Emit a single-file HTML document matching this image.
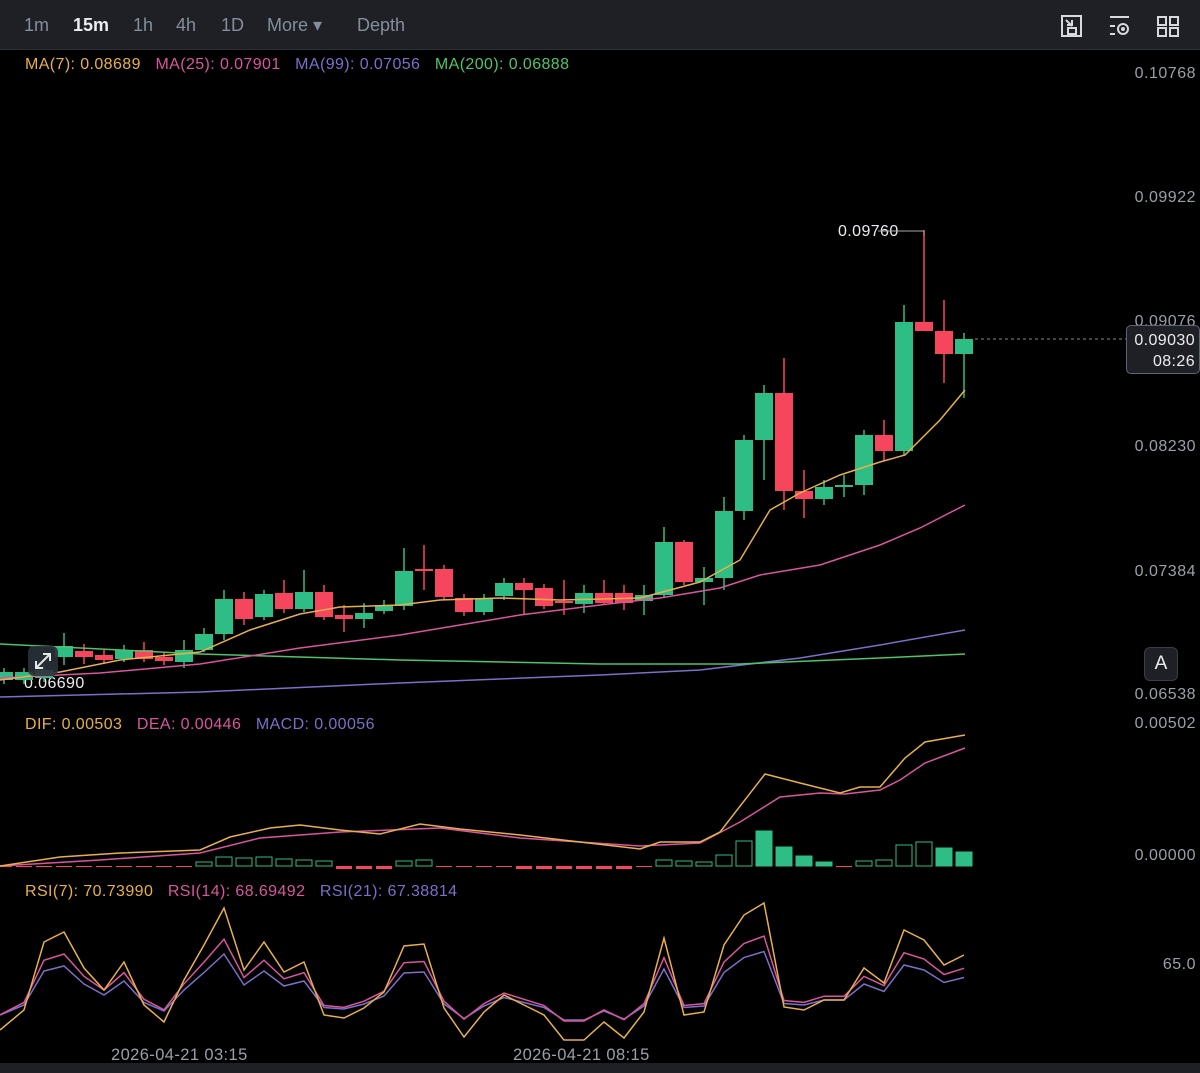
<!DOCTYPE html>
<html><head><meta charset="utf-8"><style>
body{margin:0;width:1200px;height:1073px;background:#000;overflow:hidden;font-family:"Liberation Sans",sans-serif;}
.top{position:absolute;left:0;top:0;width:1200px;height:49px;background:#1e2026;border-bottom:1px solid #2b2f36;}
.top span{position:absolute;top:15px;font-size:18px;color:#848e9c;}
.t{position:absolute;font-size:16px;letter-spacing:0.4px;white-space:nowrap}
.p{position:absolute;right:4px;font-size:16px;letter-spacing:0.5px;color:#9aa0a8}
</style></head><body>
<div class="top">
<span style="left:24px">1m</span><span style="left:73px;color:#eaecef;font-weight:bold">15m</span><span style="left:133px">1h</span><span style="left:176px">4h</span><span style="left:221px">1D</span><span style="left:267px">More ▾</span><span style="left:357px">Depth</span>
<svg style="position:absolute;left:1060px;top:14px" width="130" height="24" fill="none" stroke="#d6d9dd" stroke-width="2">
<rect x="2" y="2" width="19" height="20"/><path d="M6 6l6 6M7 11h5V6" /><rect x="8" y="14" width="8" height="6"/>
<path d="M50 3h19M50 12h5M50 20h5"/><circle cx="63" cy="15" r="5"/><circle cx="63" cy="15" r="1" fill="#d6d9dd"/>
<rect x="98" y="3" width="8" height="8"/><rect x="110" y="3" width="8" height="8"/><rect x="98" y="14" width="8" height="8"/><rect x="110" y="14" width="8" height="8"/>
</svg>
</div>
<div class="t" style="left:25px;top:56px"><span style="color:#e8b04a">MA(7): 0.08689</span>&nbsp;&nbsp;&nbsp;<span style="color:#d9569e">MA(25): 0.07901</span>&nbsp;&nbsp;&nbsp;<span style="color:#7b6fc9">MA(99): 0.07056</span>&nbsp;&nbsp;&nbsp;<span style="color:#4fc36a">MA(200): 0.06888</span></div>
<div class="t" style="left:25px;top:716px"><span style="color:#e8b04a">DIF: 0.00503</span>&nbsp;&nbsp;&nbsp;<span style="color:#d9569e">DEA: 0.00446</span>&nbsp;&nbsp;&nbsp;<span style="color:#7b6fc9">MACD: 0.00056</span></div>
<div class="t" style="left:25px;top:883px"><span style="color:#e8b04a">RSI(7): 70.73990</span>&nbsp;&nbsp;&nbsp;<span style="color:#d9569e">RSI(14): 68.69492</span>&nbsp;&nbsp;&nbsp;<span style="color:#7b6fc9">RSI(21): 67.38814</span></div>
<div class="p" style="top:65px">0.10768</div><div class="p" style="top:189px">0.09922</div><div class="p" style="top:313px">0.09076</div><div class="p" style="top:438px">0.08230</div><div class="p" style="top:563px">0.07384</div><div class="p" style="top:686px">0.06538</div><div class="p" style="top:715px">0.00502</div><div class="p" style="top:847px">0.00000</div><div class="p" style="top:956px">65.0</div>
<div style="position:absolute;left:1126px;top:325px;width:74px;height:49px;background:#1e2026;border:1px solid #5e6673;border-radius:5px;box-sizing:border-box;color:#eaecef;font-size:16px;letter-spacing:0.4px;text-align:right;padding:4px 4px 0 0;line-height:21px">0.09030<br>08:26</div>
<div style="position:absolute;left:1144px;top:647px;width:34px;height:34px;background:#1e2026;border:1px solid #3a3f47;border-radius:6px;box-sizing:border-box;color:#eaecef;font-size:19px;text-align:center;line-height:32px">A</div>
<div class="t" style="left:838px;top:223px;color:#eaecef">0.09760</div>
<div class="t" style="left:24px;top:675px;color:#eaecef">0.06690</div>
<div class="t" style="left:111px;top:1046px;color:#9aa0a8;font-size:16.5px">2026-04-21 03:15</div>
<div class="t" style="left:513px;top:1046px;color:#9aa0a8;font-size:16.5px">2026-04-21 08:15</div>
<div style="position:absolute;left:0;top:1063px;width:1200px;height:10px;background:#1e2026"></div>
<svg id="c" style="position:absolute;left:0;top:0" width="1200" height="1073"></svg>
<div style="position:absolute;left:28px;top:646px;width:30px;height:30px;background:#2b3139;border-radius:6px;opacity:.9"><svg width="30" height="30" stroke="#fff" stroke-width="2" fill="none"><path d="M8 22L22 8M15 8h7v7M8 15v7h7"/></svg></div>
<script>
var s=document.getElementById('c'),h='';
var G='#2ebd85',R='#f6465d';
var C=[[4,680,672,668,684],[24,680,672,668,684],[44,678,670,665,682],[64,657,646,633,665],[84,651,657,644,664],[104,655,660,650,664],[124,659,650,645,662],[144,650,659,642,662],[164,657,661,652,665],[184,662,650,640,668],[204,650,634,628,652],[224,634,599,590,640],[244,599,619,592,625],[264,617,594,590,620],[284,593,609,580,613],[304,609,592,570,612],[324,592,617,585,620],[344,615,619,605,632],[364,619,613,603,628],[384,611,606,600,614],[404,606,571,548,610],[424,569,570,545,590],[444,569,597,565,600],[464,598,612,594,616],[484,612,598,594,615],[504,596,583,578,600],[524,583,590,578,615],[544,588,606,584,609],[564,601,602,580,615],[584,604,593,585,613],[604,593,603,580,605],[624,593,603,585,610],[644,601,595,585,615],[664,595,542,527,598],[684,542,582,540,585],[704,582,578,567,605],[724,578,511,497,590],[744,511,440,435,520],[764,440,393,385,480],[784,393,491,358,510],[804,491,499,470,518],[824,499,487,480,505],[844,487,485,475,497],[864,485,435,430,495],[884,435,451,420,460],[904,451,322,305,455],[924,322,331,230,331],[944,331,354,300,383],[964,354,339,333,398]];
C.forEach(function(c){var col=c[2]<c[1]?G:R,t=Math.min(c[1],c[2]),b=Math.max(Math.abs(c[1]-c[2]),2);h+='<line x1="'+c[0]+'" x2="'+c[0]+'" y1="'+c[3]+'" y2="'+c[4]+'" stroke="'+col+'" stroke-width="1.5"/><rect x="'+(c[0]-9)+'" y="'+t+'" width="18" height="'+b+'" fill="'+col+'"/>';});
function pl(p,c){h+='<polyline fill="none" stroke="'+c+'" stroke-width="1.5" points="'+p+'"/>';}
pl('0,697 200,692 400,683 600,675 700,670 800,658 880,645 965,630','#7b6fc9');
pl('0,644 200,654 400,660 600,664 740,664 880,658 965,654','#4fc36a');
pl('0,678 100,673 200,664 300,648 400,635 460,625 520,615 600,605 660,598 720,588 760,575 820,565 880,545 920,528 965,505','#d9569e');
pl('0,680 60,672 120,660 200,652 250,630 300,614 340,607 400,605 440,600 500,598 560,600 640,598 700,582 740,560 770,510 800,493 840,475 880,462 905,455 940,420 965,390','#e8b04a');
h+='<line x1="975" x2="1126" y1="339" y2="339" stroke="#888" stroke-dasharray="3,3"/><line x1="878" x2="924" y1="231" y2="231" stroke="#aaa"/><line x1="924" x2="924" y1="231" y2="236" stroke="#aaa"/>';
var M=[[204,862],[224,857],[244,858],[264,857],[284,859],[304,860],[324,861],[404,861],[424,860],[664,860],[684,861],[704,862],[724,855],[744,841],[764,831],[784,847],[804,856],[824,862],[864,861],[884,860],[904,845],[924,842],[944,848],[964,852]];
for(var x=4;x<=964;x+=20){var y=866;M.forEach(function(m){if(m[0]==x)y=m[1]});if(y<866){var f=(x==964||x==944||x>=784&&x<=824||x==764)?G:'none';h+='<rect x="'+(x-8)+'" y="'+y+'" width="16" height="'+(866-y)+'" fill="'+(f==G?G:'#000')+'" stroke="'+G+'"/>';}else{var rd=(x>=520&&x<=640)||(x>=334&&x<=384)?3:1;h+='<rect x="'+(x-8)+'" y="866" width="16" height="'+rd+'" fill="'+R+'"/>';}}
pl('0,866 100,860 200,853 260,838 340,832 440,828 520,838 640,846 700,843 740,822 780,797 820,793 845,794 880,790 900,780 925,763 965,748','#d9569e');
pl('0,866 60,857 120,853 200,850 230,837 270,828 300,825 340,830 380,834 420,824 460,829 520,835 580,842 640,849 660,842 700,842 720,832 765,774 800,783 840,793 860,787 880,787 905,758 925,742 965,735','#e8b04a');
var r=[1030,1010,942,932,968,990,962,1005,1022,980,945,908,970,942,972,962,1015,1018,1008,992,946,944,1008,1037,1012,995,1005,1015,1040,1040,1022,1038,1012,938,1015,1012,945,915,903,1007,1010,1000,1000,968,983,930,940,965,955];
var a='',b='',d='';r.forEach(function(v,i){var x=4+20*i;if(i==0)x=0;a+=x+','+v+' ';b+=x+','+(990+(v-990)*0.62)+' ';d+=x+','+(995+(v-990)*0.5)+' ';});
pl(d,'#7b6fc9');pl(b,'#d9569e');pl(a,'#e8b04a');
s.innerHTML=h;
</script>
</body></html>
